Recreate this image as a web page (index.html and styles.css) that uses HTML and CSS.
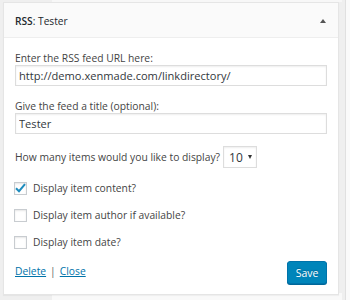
FILE: index.html
```html
<!DOCTYPE html>
<html>
<head>
<meta charset="utf-8">
<link rel="stylesheet" href="styles.css">
</head>
<body>
<div class="widget">
  <div class="widget-top">
    <h3 class="widget-title"><strong>RSS</strong>: Tester</h3>
    <span class="toggle"></span>
  </div>
  <div class="widget-inside">
    <div class="field">
      <label class="lbl">Enter the RSS feed URL here:</label>
      <input class="text" type="text" value="http://demo.xenmade.com/linkdirectory/">
    </div>
    <div class="field">
      <label class="lbl">Give the feed a title (optional):</label>
      <input class="text" type="text" value="Tester">
    </div>
    <div class="items-row">
      <span class="lbl">How many items would you like to display?</span>
      <span class="select">10 <span class="caret"></span></span>
    </div>
    <div class="checks">
      <label class="check-row"><span class="box"><svg width="11" height="10" viewBox="0 0 11 10"><path d="M1 5.2 L4 8.2 L10 1.2" fill="none" stroke="#1e8cbe" stroke-width="2"/></svg></span>Display item content?</label>
      <label class="check-row"><span class="box"></span>Display item author if available?</label>
      <label class="check-row"><span class="box"></span>Display item date?</label>
    </div>
    <div class="actions">
      <div class="links"><a href="#">Delete</a><span class="sep">|</span><a href="#">Close</a></div>
      <button class="save">Save</button>
    </div>
  </div>
</div>
</body>
</html>
```

FILE: styles.css
```css
html, body {
  margin: 0;
  padding: 0;
}
body {
  width: 350px;
  height: 300px;
  overflow: hidden;
  font-family: "Open Sans", "Noto Sans", sans-serif;
  color: #444;
  background:
    linear-gradient(#e0e0e0, #e0e0e0) 345px 0 / 1px 100% no-repeat,
    linear-gradient(#fafafa, #fafafa) 346px 0 / 10px 100% no-repeat,
    linear-gradient(#f7f7f7, #f7f7f7) 52px 0 / 290px 2px no-repeat,
    linear-gradient(#f9f9f9, #f9f9f9) 52px 293px / 290px 7px no-repeat,
    #efefef;
  padding-top: 2px;
  box-sizing: border-box;
}
.widget {
  margin-left: 3px;
  width: 336px;
  box-sizing: border-box;
  border: 1px solid #e5e5e5;
  background: #fff;
  box-shadow: 0 1px 1px rgba(0,0,0,.04);
}
.widget-top {
  height: 34px;
  background: #fafafa;
  border-bottom: 1px solid #eee;
  display: flex;
  align-items: center;
  justify-content: space-between;
  padding: 0 12px 0 11px;
}
.widget-title {
  margin: 0;
  font-size: 10.2px;
  font-weight: 400;
  color: #23282d;
  line-height: 14px;
  padding-top: 1px;
}
.widget-title strong {
  font-weight: 600;
}
.toggle {
  width: 0;
  height: 0;
  border-left: 3.5px solid transparent;
  border-right: 3.5px solid transparent;
  border-bottom: 4px solid #555;
  margin-top: 1px;
}
.widget-inside {
  padding: 13px 11px 10px 11px;
  display: flex;
  flex-direction: column;
}
.field {
  display: flex;
  flex-direction: column;
  margin-bottom: 13px;
}
.lbl {
  font-size: 10.3px;
  line-height: 14px;
  color: #444;
}
.text {
  margin: 0;
  height: 21px;
  box-sizing: border-box;
  border: 1px solid #ddd;
  box-shadow: inset 0 1px 2px rgba(0,0,0,.07);
  padding: 0 3px;
  font-family: "Open Sans", "Noto Sans", sans-serif;
  font-size: 11.1px;
  color: #32373c;
  outline: none;
  width: 100%;
}
.items-row {
  display: flex;
  align-items: center;
  gap: 3px;
  margin-top: -1px;
}
.select {
  display: inline-flex;
  align-items: center;
  height: 22px;
  width: 34px;
  box-sizing: border-box;
  border: 1px solid #ddd;
  box-shadow: inset 0 1px 2px rgba(0,0,0,.07);
  padding-left: 5px;
  font-size: 12px;
  color: #32373c;
  gap: 5px;
}
.caret {
  width: 0;
  height: 0;
  border-left: 2.5px solid transparent;
  border-right: 2.5px solid transparent;
  border-top: 4px solid #333;
}
.checks {
  display: flex;
  flex-direction: column;
  gap: 7px;
  margin-top: 10px;
}
.check-row {
  display: flex;
  align-items: center;
  gap: 6px;
  height: 20px;
  font-size: 10.3px;
  color: #444;
  margin-left: -1px;
}
.box {
  width: 13px;
  height: 13px;
  box-sizing: border-box;
  border: 1px solid #c8ccd0;
  box-shadow: inset 0 1px 2px rgba(0,0,0,.1);
  background: #fff;
  display: flex;
  align-items: center;
  justify-content: center;
}
.box svg {
  display: block;
}
.actions {
  display: flex;
  justify-content: space-between;
  align-items: flex-start;
  margin-top: 9px;
}
.links {
  font-size: 10.3px;
  line-height: 14px;
  color: #444;
  padding-top: 3px;
}
.links a {
  color: #0073aa;
  text-decoration: underline;
}
.sep {
  color: #666;
  margin: 0 4px;
}
.save {
  margin: 0;
  height: 23px;
  width: 40px;
  box-sizing: border-box;
  background: #0085ba;
  border: 1px solid #0073aa;
  border-radius: 3px;
  box-shadow: 0 1px 0 #006799;
  color: #fff;
  font-family: "Open Sans", "Noto Sans", sans-serif;
  font-size: 10.5px;
  padding: 0;
  text-shadow: 0 -1px 1px #006799;
}
```
